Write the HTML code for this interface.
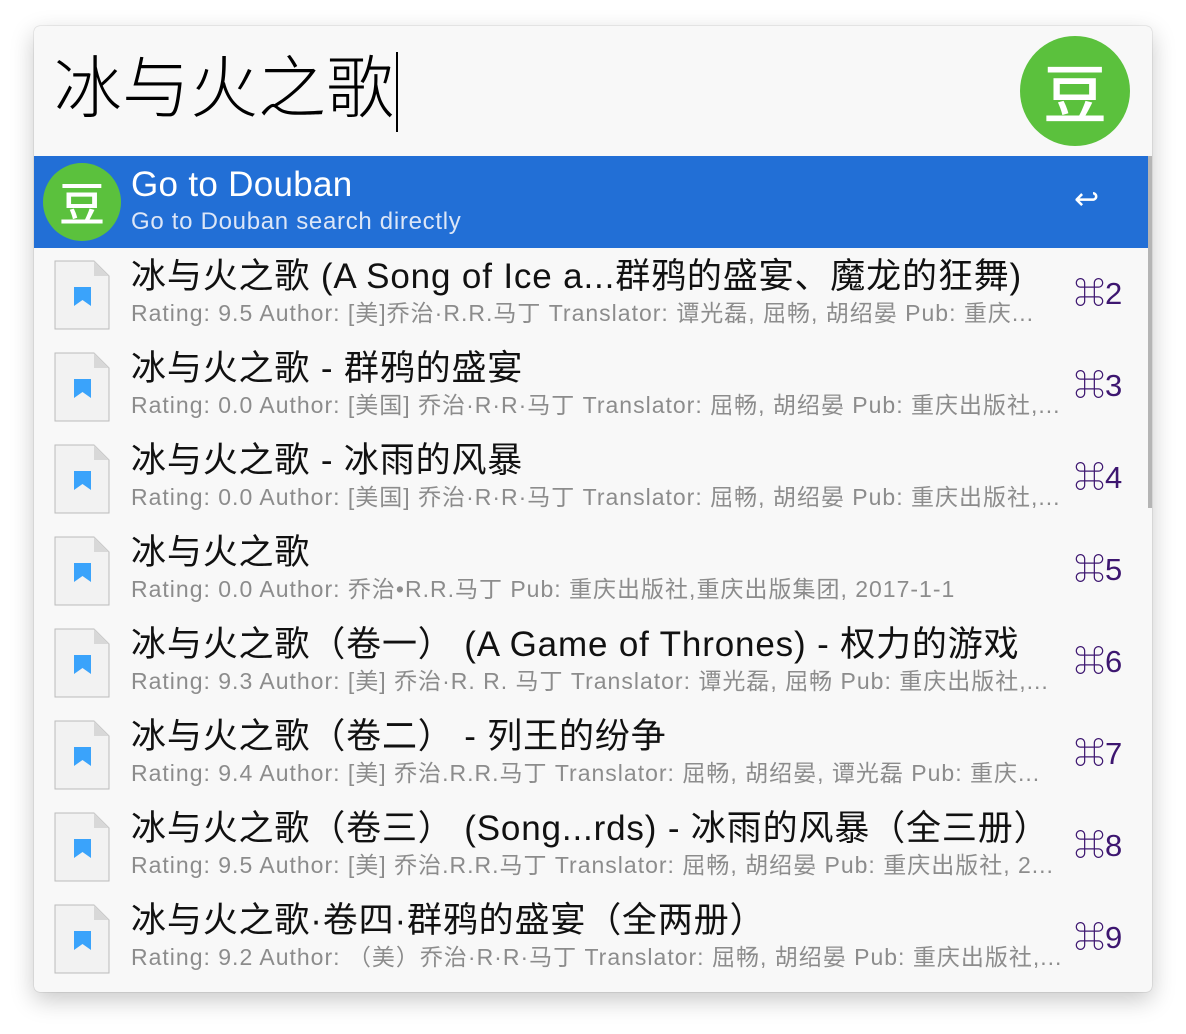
<!DOCTYPE html>
<html><head><meta charset="utf-8">
<style>
*{margin:0;padding:0;box-sizing:border-box}
body{width:1186px;height:1034px;background:#fff;position:relative;overflow:hidden;font-family:"Liberation Sans","Noto Sans CJK SC",sans-serif}
.win{position:absolute;left:34px;top:26px;width:1118px;height:966px;background:#f8f8f8;border-radius:6px;box-shadow:0 8px 24px rgba(0,0,0,.22),0 0 1px rgba(0,0,0,.4);overflow:hidden}
.q{position:absolute;left:20px;top:23px;font-size:68px;line-height:80px;color:#000;font-weight:300;white-space:nowrap}
.cur{position:absolute;left:362px;top:26px;width:2px;height:80px;background:#000}
.logo{position:absolute;border-radius:50%;background:#5bc13d;color:#fff;display:flex;align-items:center;justify-content:center;font-family:"Noto Sans CJK SC",sans-serif;font-weight:500}
.sel{position:absolute;left:0;top:130px;width:1114px;height:92px;background:#226fd6}
.sb{position:absolute;left:1114px;top:130px;width:4px;height:352px;background:#b5b5b5}
.row{position:absolute;left:0;width:1114px;height:92px}
.t{position:absolute;left:97px;top:8px;font-size:35px;line-height:42px;color:#111;white-space:nowrap;letter-spacing:0.85px}
.s{position:absolute;left:97px;top:52px;font-size:23px;line-height:26px;color:#8c8c8c;white-space:nowrap;letter-spacing:1px}
.k{position:absolute;left:1040px;top:28px;font-size:31px;line-height:36px;color:#3d1670;white-space:nowrap}
.doc{position:absolute;left:20px;top:12px}
</style></head><body>
<div class="win">
<div class="q">冰与火之歌</div>
<div class="cur"></div>
<div class="logo" style="left:986px;top:10px;width:110px;height:110px;font-size:64px">豆</div>
<div class="sel">
  <div class="logo" style="left:9px;top:7px;width:78px;height:78px;font-size:46px">豆</div>
  <div style="position:absolute;left:97px;top:8px;font-size:35px;line-height:42px;color:#fff;letter-spacing:0.3px">Go to Douban</div>
  <div style="position:absolute;left:97px;top:52px;font-size:24px;line-height:28px;color:#dce6f7;letter-spacing:0.7px">Go to Douban search directly</div>
  <div style="position:absolute;left:1040px;top:26px;font-size:30px;line-height:36px;color:#fff">↩</div>
</div>
<div class="sb"></div>

<div class="row" style="top:222px"><svg class="doc" width="56" height="70" viewBox="0 0 56 70"><path d="M1 1H40L55 16V69H1Z" fill="#f2f2f2" stroke="#bbb"/><path d="M40 1V16H55Z" fill="#d8d8d8"/><path d="M20 27H37V46L28.5 40L20 46Z" fill="#3aa3fb"/></svg>
<div class="t">冰与火之歌 (A Song of Ice a...群鸦的盛宴、魔龙的狂舞)</div><div class="s">Rating: 9.5 Author: [美]乔治·R.R.马丁 Translator: 谭光磊, 屈畅, 胡绍晏 Pub: 重庆...</div><div class="k">⌘2</div></div>

<div class="row" style="top:314px"><svg class="doc" width="56" height="70" viewBox="0 0 56 70"><path d="M1 1H40L55 16V69H1Z" fill="#f2f2f2" stroke="#bbb"/><path d="M40 1V16H55Z" fill="#d8d8d8"/><path d="M20 27H37V46L28.5 40L20 46Z" fill="#3aa3fb"/></svg>
<div class="t">冰与火之歌 - 群鸦的盛宴</div><div class="s">Rating: 0.0 Author: [美国] 乔治·R·R·马丁 Translator: 屈畅, 胡绍晏 Pub: 重庆出版社,...</div><div class="k">⌘3</div></div>

<div class="row" style="top:406px"><svg class="doc" width="56" height="70" viewBox="0 0 56 70"><path d="M1 1H40L55 16V69H1Z" fill="#f2f2f2" stroke="#bbb"/><path d="M40 1V16H55Z" fill="#d8d8d8"/><path d="M20 27H37V46L28.5 40L20 46Z" fill="#3aa3fb"/></svg>
<div class="t">冰与火之歌 - 冰雨的风暴</div><div class="s">Rating: 0.0 Author: [美国] 乔治·R·R·马丁 Translator: 屈畅, 胡绍晏 Pub: 重庆出版社,...</div><div class="k">⌘4</div></div>

<div class="row" style="top:498px"><svg class="doc" width="56" height="70" viewBox="0 0 56 70"><path d="M1 1H40L55 16V69H1Z" fill="#f2f2f2" stroke="#bbb"/><path d="M40 1V16H55Z" fill="#d8d8d8"/><path d="M20 27H37V46L28.5 40L20 46Z" fill="#3aa3fb"/></svg>
<div class="t">冰与火之歌</div><div class="s">Rating: 0.0 Author: 乔治•R.R.马丁 Pub: 重庆出版社,重庆出版集团, 2017-1-1</div><div class="k">⌘5</div></div>

<div class="row" style="top:590px"><svg class="doc" width="56" height="70" viewBox="0 0 56 70"><path d="M1 1H40L55 16V69H1Z" fill="#f2f2f2" stroke="#bbb"/><path d="M40 1V16H55Z" fill="#d8d8d8"/><path d="M20 27H37V46L28.5 40L20 46Z" fill="#3aa3fb"/></svg>
<div class="t">冰与火之歌（卷一） (A Game of Thrones) - 权力的游戏</div><div class="s">Rating: 9.3 Author: [美] 乔治·R. R. 马丁 Translator: 谭光磊, 屈畅 Pub: 重庆出版社,...</div><div class="k">⌘6</div></div>

<div class="row" style="top:682px"><svg class="doc" width="56" height="70" viewBox="0 0 56 70"><path d="M1 1H40L55 16V69H1Z" fill="#f2f2f2" stroke="#bbb"/><path d="M40 1V16H55Z" fill="#d8d8d8"/><path d="M20 27H37V46L28.5 40L20 46Z" fill="#3aa3fb"/></svg>
<div class="t">冰与火之歌（卷二） - 列王的纷争</div><div class="s">Rating: 9.4 Author: [美] 乔治.R.R.马丁 Translator: 屈畅, 胡绍晏, 谭光磊 Pub: 重庆...</div><div class="k">⌘7</div></div>

<div class="row" style="top:774px"><svg class="doc" width="56" height="70" viewBox="0 0 56 70"><path d="M1 1H40L55 16V69H1Z" fill="#f2f2f2" stroke="#bbb"/><path d="M40 1V16H55Z" fill="#d8d8d8"/><path d="M20 27H37V46L28.5 40L20 46Z" fill="#3aa3fb"/></svg>
<div class="t">冰与火之歌（卷三） (Song...rds) - 冰雨的风暴（全三册）</div><div class="s">Rating: 9.5 Author: [美] 乔治.R.R.马丁 Translator: 屈畅, 胡绍晏 Pub: 重庆出版社, 2...</div><div class="k">⌘8</div></div>

<div class="row" style="top:866px"><svg class="doc" width="56" height="70" viewBox="0 0 56 70"><path d="M1 1H40L55 16V69H1Z" fill="#f2f2f2" stroke="#bbb"/><path d="M40 1V16H55Z" fill="#d8d8d8"/><path d="M20 27H37V46L28.5 40L20 46Z" fill="#3aa3fb"/></svg>
<div class="t">冰与火之歌·卷四·群鸦的盛宴（全两册）</div><div class="s">Rating: 9.2 Author: （美）乔治·R·R·马丁 Translator: 屈畅, 胡绍晏 Pub: 重庆出版社,...</div><div class="k">⌘9</div></div>
</div>
</body></html>
